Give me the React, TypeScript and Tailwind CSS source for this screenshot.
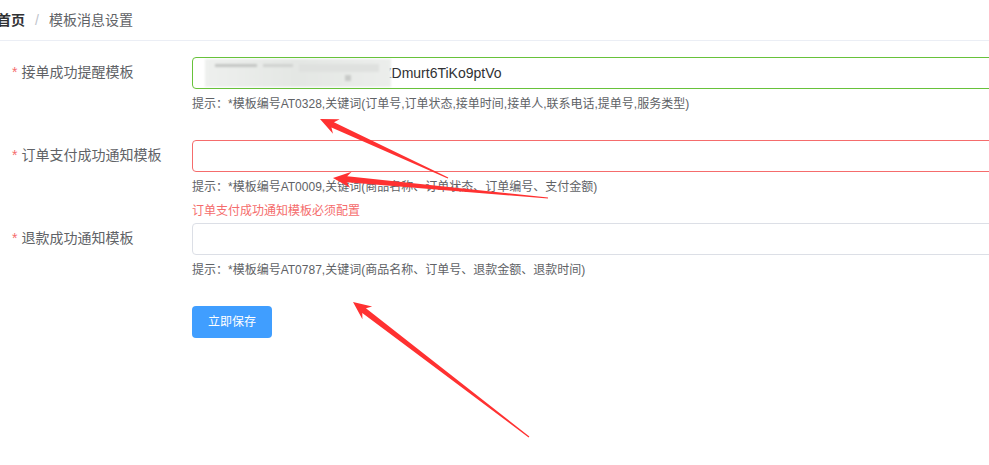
import React from "react";

const FONT = { fontFamily: '"Liberation Sans", "Noto Sans CJK SC", sans-serif' };

function Arrow({ tip, tail }: { tip: [number, number]; tail: [number, number] }) {
  const dx = tail[0] - tip[0];
  const dy = tail[1] - tip[1];
  const len = Math.hypot(dx, dy);
  const d = [dx / len, dy / len];
  const n = [-d[1], d[0]];
  const L = 18;
  const hw = 8;
  const sw = 3;
  const p = (base: number[], a: number, b: number) => [base[0] + d[0] * a + n[0] * b, base[1] + d[1] * a + n[1] * b];
  const pts = [
    tip,
    p(tip, L, hw),
    p(tip, L - 4, sw),
    p(tail, 0, 0.6),
    p(tail, 0, -0.6),
    p(tip, L - 4, -sw),
    p(tip, L, -hw),
  ];
  return <polygon points={pts.map((q) => q.join(",")).join(" ")} fill="#ff3131" />;
}

function Row({
  label,
  border,
  hint,
  error,
  children,
}: {
  label: string;
  border: string;
  hint: string;
  error?: string;
  children?: React.ReactNode;
}) {
  return (
    <div className="flex mb-[22px]">
      <div className="w-[192px] shrink-0 pl-[12px] h-[30px] flex items-center text-[14px] text-[#606266]">
        <span className="text-[#f56c6c] mr-[4px]">*</span>
        {label}
      </div>
      <div className="flex-1 relative">
        <div className={`h-[32px] rounded-[4px] border ${border} flex items-center overflow-hidden pl-[12px]`}>
          {children}
        </div>
        <div className="h-[29px] pt-[1px] flex items-center text-[12px] text-[#606266] whitespace-nowrap">{hint}</div>
        {error && (
          <div className="absolute left-0 top-full pt-[4px] text-[12px] leading-none text-[#f56c6c] whitespace-nowrap">
            {error}
          </div>
        )}
      </div>
    </div>
  );
}

export default function App() {
  return (
    <div className="relative w-[989px] h-[465px] bg-white overflow-hidden" style={FONT}>
      <div className="h-[41px] border-b border-[#ebeef5] flex items-center text-[14px] ml-[-3px]">
        <span className="font-bold text-[#303133]">首页</span>
        <span className="mx-[10px] text-[#c0c4cc]">/</span>
        <span className="text-[#606266]">模板消息设置</span>
      </div>
      <div className="pt-[16px] w-[1100px]">
        <Row
          label="接单成功提醒模板"
          border="border-[#67c23a]"
          hint="提示：*模板编号AT0328,关键词(订单号,订单状态,接单时间,接单人,联系电话,提单号,服务类型)"
        >
          <div className="w-[186px] h-[28px] shrink-0 flex flex-col gap-[3px] pt-[5px] pl-[10px] bg-gradient-to-r from-[#eef0ee] via-[#e4e7e4] to-[#eceeec] blur-[1px]">
            <div className="flex gap-[6px]">
              <div className="w-[42px] h-[3px] bg-[#c4c6c4]" />
              <div className="w-[30px] h-[3px] bg-[#d0d2d0]" />
              <div className="w-[80px] h-[8px] bg-[#dfe1df]" />
            </div>
            <div className="ml-[130px] w-[6px] h-[6px] bg-[#c8cac8]" />
          </div>
          <span className="text-[14px] text-[#303133] ml-[-8px]">ZDmurt6TiKo9ptVo</span>
        </Row>
        <Row
          label="订单支付成功通知模板"
          border="border-[#f56c6c]"
          hint="提示：*模板编号AT0009,关键词(商品名称、订单状态、订单编号、支付金额)"
          error="订单支付成功通知模板必须配置"
        />
        <Row
          label="退款成功通知模板"
          border="border-[#dcdfe6]"
          hint="提示：*模板编号AT0787,关键词(商品名称、订单号、退款金额、退款时间)"
        />
        <div className="pl-[192px]">
          <button className="w-[80px] h-[32px] rounded-[4px] bg-[#409eff] text-white text-[12px]">立即保存</button>
        </div>
      </div>
      <svg className="absolute inset-0 pointer-events-none" width="989" height="465">
        <Arrow tip={[320, 119]} tail={[448, 178]} />
        <Arrow tip={[333, 178]} tail={[548, 198]} />
        <Arrow tip={[353, 302]} tail={[529, 437]} />
      </svg>
    </div>
  );
}
